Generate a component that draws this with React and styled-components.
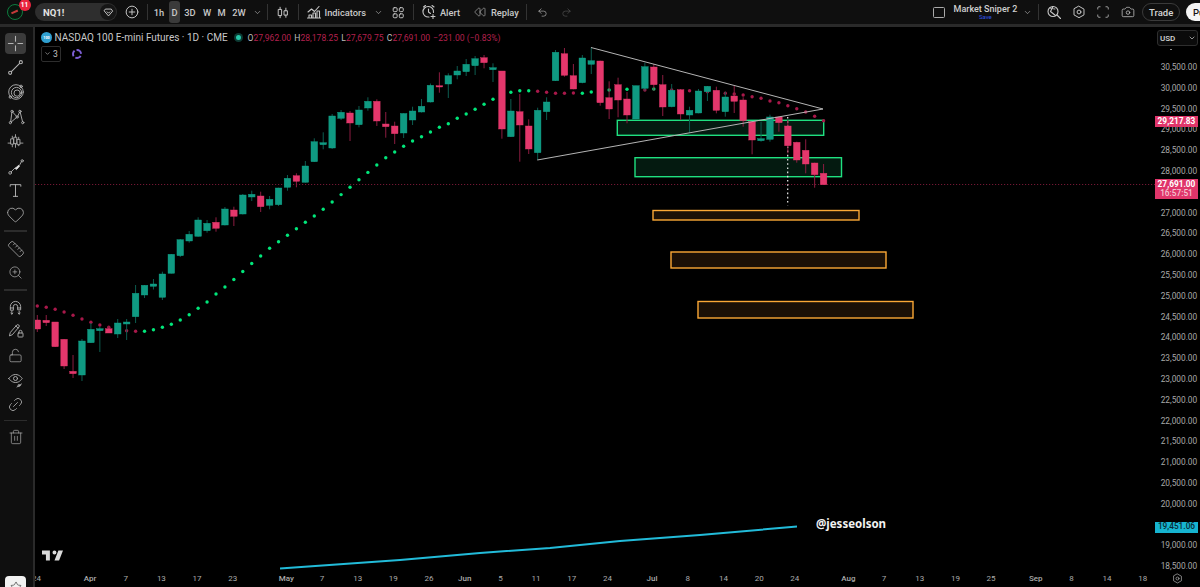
import React from "react";
import styled, { createGlobalStyle } from "styled-components";
import { Plus, ChevronDown, Undo2, Redo2, Camera, Heart, ZoomIn, LockOpen, Link2, Trash2, Ruler, Rewind, Star, Scan } from "lucide-react";

const Global = createGlobalStyle`
  html, body { margin: 0; padding: 0; background: #000; overflow: hidden; }
  #root { width: 1200px; height: 587px; }
  * { box-sizing: border-box; }
`;

const Page = styled.div`
  width: 1200px; height: 587px; display: flex; flex-direction: column; overflow: hidden;
  background: #000; font-family: Roboto, "Liberation Sans", sans-serif; color: #d1d4dc;
`;
const Header = styled.header`
  height: 27px; flex: none; display: flex; align-items: center; padding: 0 0 0 7px;
  background: #0f0f0f; border-bottom: 3px solid #2a2a2a;
`;
const Avatar = styled.div`
  position: relative; width: 16px; height: 16px; flex: none; border-radius: 50%;
  background: #07160d; border: 1.5px solid #0f7c3f;
`;
const AvatarMark = styled.span`
  position: absolute; left: 3px; top: 6px; width: 7px; height: 1.5px; background: #c23a3a; transform: rotate(-25deg);
`;
const Badge = styled.span`
  position: absolute; left: 10.5px; top: -5.8px; width: 12px; height: 12px; border-radius: 50%;
  background: #e8243f; color: #fff; font-size: 6.5px; font-weight: 700; display: flex; align-items: center; justify-content: center;
`;
const SymbolPill = styled.div`
  flex: none; width: 82px; height: 18px; margin-left: 12px; border-radius: 9px; background: #2e2e2e;
  display: flex; align-items: center; justify-content: space-between; padding: 0 1px 0 8px;
  font-size: 9.5px; font-weight: 700; color: #e4e4e4;
`;
const SymbolIcon = styled.span`
  width: 16px; height: 16px; border-radius: 50%; background: #161616; display: flex; align-items: center; justify-content: center;
`;
const Cell = styled.div`
  flex: none; width: ${p => p.$w}px; margin-left: ${p => p.$ml || 0}px; display: flex; align-items: center; justify-content: ${p => p.$left ? "flex-start" : "center"};
  white-space: nowrap; font-size: ${p => p.$fs || 9.3}px; font-weight: 500; color: ${p => p.$c || "#c8c8c8"};
  height: ${p => p.$active ? 22 : 16}px; border-radius: ${p => p.$active ? 3 : 0}px; background: ${p => p.$active ? "#3a3a3a" : "transparent"};
`;
const Sep = styled.span`
  flex: none; width: 1px; height: 16px; margin-left: ${p => p.$ml || 0}px; background: #333;
`;
const SaveBlock = styled.div`
  flex: none; width: 63px; margin-left: 9px; display: flex; flex-direction: column; align-items: center; line-height: 1;
`;
const LayoutName = styled.span`
  font-size: 9px; font-weight: 500; color: #cfcfcf; white-space: nowrap; line-height: 10px;
`;
const SaveLabel = styled.span`
  font-size: 6px; color: #2f55e8; line-height: 6px;
`;
const Square = styled.span`
  flex: none; width: 12.3px; height: 11px; margin-left: 359.7px; border: 1px solid #aaa; border-radius: 1.5px;
`;
const TradePill = styled.div`
  flex: none; width: 37.5px; height: 18px; margin-left: 7.5px; border: 1px solid #3a3a3a; border-radius: 9px;
  display: flex; align-items: center; justify-content: center; font-size: 9.5px; font-weight: 500; color: #d4d4d4;
`;
const PublishPill = styled.div`
  flex: none; width: 44px; height: 18px; margin-left: 6px; border-radius: 9px; background: #f4f4f4; color: #111;
  font-size: 9.5px; font-weight: 500; display: flex; align-items: center; padding-left: 7px;
`;
const Body = styled.div`
  flex: 1; min-height: 0; display: flex;
`;
const LeftBar = styled.aside`
  flex: none; width: 35px; position: relative; z-index: 2; background: #0f0f0f; border-right: 2.3px solid #2a2a2a;
  padding: 6px 0 0 5px; display: flex; flex-direction: column; color: #b4b4b4;
`;
const ToolButton = styled.div`
  flex: none; width: 21px; height: ${p => p.$h || 24.4}px; display: flex; align-items: center; justify-content: center;
  background: ${p => p.$active ? "#3b3b3b" : "transparent"}; border-radius: ${p => p.$active ? 4 : 0}px;
`;
const ToolSep = styled.span`
  flex: none; width: 23px; height: 1.5px; margin: ${p => p.$m}; background: #2c2c2c;
`;
const StarButton = styled.div`
  position: absolute; left: 5px; top: 549px; width: 21px; height: 21px; background: #f2f2f2; border-radius: 4px;
  display: flex; align-items: center; justify-content: center; color: #222;
`;
const ChartColumn = styled.div`
  flex: none; width: 1120px; display: flex; flex-direction: column;
`;
const Plot = styled.div`
  position: relative; width: 1120px; height: 543px; flex: none; overflow: hidden;
`;
const ChartSvg = styled.svg`
  display: block; width: 1120px; height: 543px;
`;
const Legend = styled.div`
  position: absolute; left: 6px; top: 5px; display: flex; flex-direction: column; gap: 2.5px;
`;
const LegendRow = styled.div`
  display: flex; align-items: center; white-space: nowrap;
`;
const IndexLogo = styled.span`
  width: 11px; height: 11px; border-radius: 50%; background: #2f9fd0; color: #fff; font-size: 3.8px; font-weight: 700;
  display: flex; align-items: center; justify-content: center;
`;
const LegendTitle = styled.span`
  font-size: 10px; color: #c9c9c9; margin-left: 2.5px; width: 174px;
`;
const StatusDot = styled.span`
  width: 9px; height: 9px; border-radius: 50%; background: #0c3a33; display: flex; align-items: center; justify-content: center; margin: 0 4.5px 0 5.5px;
  &::after { content: ""; width: 5px; height: 5px; border-radius: 50%; background: #26c6a8; }
`;
const Ohlc = styled.span`
  font-size: 8.6px; margin-right: 3.1px; color: #b3204e;
`;
const OhlcKey = styled.span`
  color: #bdbdbd;
`;
const CountBox = styled.span`
  width: 20px; height: 16px; border: 1px solid #2d2d2d; border-radius: 2px; font-size: 8.5px; color: #c4c4c4;
  display: flex; align-items: center; justify-content: center; gap: 2px;
`;
const Ring = styled.span`
  width: 10px; height: 10px; margin-left: 11px; border-radius: 50%; border: 2px dashed #7e5fd6;
`;
const Watermark = styled.div`
  position: absolute; left: 781px; top: 489px; font-family: "Noto Sans", sans-serif; font-size: 11.5px; font-weight: 700; color: #f2f2f2; line-height: 16px;
`;
const TvLogo = styled.svg`
  position: absolute; left: 6.5px; top: 522.5px; width: 21px; height: 11px; fill: #dadada;
`;
const TimeAxis = styled.div`
  height: 17px; flex: none; overflow: hidden;
`;
const TimeGrid = styled.div`
  display: grid; grid-template-columns: repeat(126, 8.935px); margin-left: -3px; height: 17px; align-items: center;
`;
const Tick = styled.span`
  grid-column: ${p => p.$i + 1}; grid-row: 1; justify-self: center; white-space: nowrap; font-size: 8px; color: #ababab;
  font-weight: ${p => p.$major ? 500 : 400};
`;
const PriceAxis = styled.aside`
  flex: none; width: 45px; position: relative; display: flex; flex-direction: column; background: #000;
`;
const CurrencySelect = styled.div`
  flex: none; width: 41px; height: 16px; margin: 3px 0 0 2px; border: 1px solid #2e2e2e; border-radius: 3px; background: #0b0b0b;
  display: flex; align-items: center; justify-content: space-between; padding: 0 1px 0 2px; font-size: 8px; font-weight: 500; color: #d8d8d8;
`;
const TopTick = styled.span`
  position: absolute; left: 15px; top: 22px; width: 2px; height: 1px; background: #888;
`;
const PriceList = styled.div`
  flex: none; height: 513.4px; margin-top: 10.6px;
`;
const PriceRow = styled.div`
  height: 20.8px; display: flex; align-items: center; padding-left: 5.7px; font-size: 8.3px; color: #a8a8a8; white-space: nowrap;
`;
const AxisCorner = styled.div`
  flex: none; height: 17px; padding-left: 17px; display: flex; align-items: center; color: #a8a8a8;
`;
const PriceTag = styled.div`
  position: absolute; left: 0; top: ${p => p.$top}px; width: 43px; height: ${p => p.$h}px; background: ${p => p.$bg};
  color: ${p => p.$c || "#fff"}; font-size: 8.3px; font-weight: ${p => p.$w || 700}; display: flex; flex-direction: column; align-items: center; justify-content: center; line-height: 9.5px;
`;
const TagSub = styled.span`
  font-weight: 500; color: #f4c6d3;
`;

const C = [
[315,320,329,332,"r"],[315,320.3,322.7,326,"r"],[322,322,346.7,347,"r"],[339,339.3,366,369,"r"],[355,371.3,373.7,378,"r"],
[339,341,375,381,"g"],[323,329.3,342.7,343,"g"],[327,328.7,330.7,352,"g"],[326,328.7,333,333,"r"],[319,323,334,338,"g"],
[319,322,324,340,"g"],[285,293.3,316.7,323,"g"],[285,285.3,295,298,"g"],[279,284,286.3,289.5,"g"],[271.7,274,297.3,300,"g"],
[254,254.3,273.3,273.5,"g"],[239,239.7,255.7,257,"g"],[231,234.3,241,242.7,"g"],[217.3,220,236.3,236.7,"g"],[220,223.3,230.7,232.7,"g"],
[217.3,222.3,228.3,231.7,"r"],[207,209,225,225.5,"g"],[206.7,210,216.3,226,"r"],[194,195,214,214.5,"g"],[190.7,194.3,197,201,"g"],
[191.7,196,206.7,212,"r"],[196,199.3,205.3,209.3,"g"],[187.7,188,204.7,206,"g"],[175,178.3,187.3,190.7,"g"],[173.3,175.7,181.3,187.3,"r"],
[161,166,182.3,182.5,"g"],[138.3,141.7,161.7,162,"g"],[132.3,142.7,144.7,149.3,"g"],[114,116,148,149,"g"],[110,112.3,118.3,120,"g"],
[111,113,123,141,"r"],[106,110,124.7,127.3,"g"],[97.3,101.3,108,110.7,"g"],[99.3,101.3,121,126,"r"],[112,124,126.7,137.7,"r"],
[121.7,126,133.7,144,"r"],[113.3,113.5,133,138,"g"],[106.7,111,120,125,"g"],[99,106.3,112,112.5,"g"],[83.5,85.3,102,102.5,"g"],
[72.3,85.7,87,92.7,"r"],[73.3,75.7,84,98,"g"],[66,71,75,79.3,"g"],[59,64.3,71.7,76,"g"],[56,58.7,65.7,75,"g"],
[55,57.7,62.7,68.3,"r"],[63.3,67.7,69.7,82,"g"],[71,71,129,138.7,"r"],[99,111,136.7,137,"g"],[94,111.7,125,161.7,"r"],
[119.3,126,149,154,"r"],[107.7,110.3,152.7,160,"g"],[97.3,102,111.7,120,"g"],[50,52.3,80.7,81,"g"],[48,53.7,75.3,76.7,"r"],
[64,75.7,89,89.3,"r"],[55,58,82.7,83.3,"g"],[47.3,60.7,64.3,74,"g"],[60.7,61,102.7,105.7,"r"],[81.3,97.7,109,119,"r"],
[77.7,84.7,100,117.3,"r"],[92,99,115,123.3,"r"],[85.7,85.7,119,119.5,"g"],[62.7,66.7,88.3,90.7,"g"],[64,67,84.7,90.7,"r"],
[75,84.7,107,116,"r"],[84,90.3,106.7,107.3,"g"],[89,89.7,114,120,"r"],[106.7,110.3,115,132.7,"g"],[89,91,113,113.3,"g"],
[86,86.3,91.7,101,"g"],[86.7,90.3,110.3,113.3,"r"],[91.7,97,111.7,116.7,"g"],[85.7,96,101.3,113,"r"],[97.3,100,120.7,126.7,"r"],
[121.7,121.7,140,154.3,"r"],[121.7,138.7,140.7,141.7,"g"],[114.7,117,139.3,141.7,"g"],[116.7,117,122.7,131.7,"r"],[120,126,145.7,153.3,"r"],
[141.7,142.3,160,162.7,"r"],[139.3,150.3,164,173.3,"r"],[162.7,163,174.7,187.7,"r"],[164,173.3,184.7,184.7,"r"],
];
const barX = i => 37.3 + 8.935 * i;

const D = [
[0,306,"r"],[1,307.3,"r"],[2,309.3,"r"],[3,312,"r"],[4,315.3,"r"],[5,319,"r"],[6,322.3,"r"],[7,325,"r"],[8,327.3,"r"],[9,329,"r"],[10,330.7,"r"],[11,331.3,"r"],
[12,331.3,"g"],[13,329.7,"g"],[14,327.3,"g"],[15,324.3,"g"],[16,320,"g"],[17,314.7,"g"],[18,308.3,"g"],[19,302,"g"],[20,294,"g"],[21,287,"g"],
[22,279.5,"g"],[23,271.5,"g"],[24,263.5,"g"],[25,256,"g"],[26,248.3,"g"],[27,241.7,"g"],[28,235.3,"g"],[29,228.7,"g"],[30,222.3,"g"],[31,216,"g"],[32,209.3,"g"],
[33,202,"g"],[34,194.6,"g"],[35,187.2,"g"],[36,179.8,"g"],[37,172.4,"g"],[38,165,"g"],[39,157.7,"g"],[40,152,"g"],[41,146.3,"g"],[42,141,"g"],[43,136.7,"g"],[44,132,"g"],[45,127.3,"g"],[46,123.7,"g"],[47,118.3,"g"],[48,114,"g"],[49,109.3,"g"],[50,104.3,"g"],[51,99.3,"g"],
[53,92.3,"g"],[54,90.7,"g"],[55,90.7,"g"],[56,91.3,"r"],[57,92.3,"r"],[58,93.3,"r"],[59,93.3,"r"],[60,93,"r"],[61,93.3,"g"],[62,92,"g"],[64,90,"g"],[66,89.3,"g"],[68,90,"r"],[69,89,"g"],[71,90,"r"],[73,90.7,"r"],[75,91.7,"r"],[77,93.3,"r"],[78,94,"r"],[79,95,"r"],[80,96.7,"r"],[81,98.3,"r"],[82,101,"r"],[83,102.7,"r"],[84,105.7,"r"],[85,108.7,"r"],[86,112,"r"],[87,116.3,"r"],[88,120.7,"r"],
];

const ZONES = [
  [617.3,120.3,206.4,15,"g"],[635,157.7,206.5,19,"g"],
  [653,210.5,206,9.5,"o"],[671,252,215,16,"o"],[698,301.5,215,16.5,"o"],
];
const TICKS = [[0,"24"],[6,"Apr",1],[10,"7"],[14,"13"],[18,"17"],[22,"23"],[28,"May",1],[32,"7"],[36,"13"],[40,"19"],[44,"26"],[48,"Jun",1],[52,"5"],[56,"11"],[60,"17"],[64,"24"],[69,"Jul",1],[73,"8"],[77,"14"],[81,"20"],[85,"24"],[91,"Aug",1],[95,"7"],[99,"13"],[103,"19"],[107,"25"],[112,"Sep",1],[116,"8"],[120,"14"],[124,"18"]];
const PRICES = ["30,500.00","30,000.00","29,500.00","29,000.00","28,500.00","28,000.00","","27,000.00","26,500.00","26,000.00","25,500.00","25,000.00","24,500.00","24,000.00","23,500.00","23,000.00","22,500.00","22,000.00","21,500.00","21,000.00","20,500.00","20,000.00","","19,000.00","18,500.00"];

const I = ({ children, s = 16, w = 1.1 }) => (
  <svg width={s} height={s} viewBox="0 0 16 16" fill="none" stroke="currentColor" strokeWidth={w} strokeLinecap="round" strokeLinejoin="round">{children}</svg>
);
const ic = { size: 14, strokeWidth: 1.3 };

const Chart = () => (
  <ChartSvg viewBox="35 27 1120 543">
    {ZONES.map(([x,y,w,h,k],i) => (
      <rect key={i} x={x} y={y} width={w} height={h} fill={k === "g" ? "#041a10" : "#1b1006"} stroke={k === "g" ? "#1fe080" : "#fba836"} strokeWidth="1.4" />
    ))}
    <line x1="35" y1="184.5" x2="1155" y2="184.5" stroke="#8f1d40" strokeWidth="0.8" strokeDasharray="1.2 1.8" />
    <line x1="787.7" y1="117" x2="787.7" y2="205.5" stroke="#f0f0f0" strokeWidth="1.2" strokeDasharray="1.6 2.6" />
    {D.map(([i,y,k]) => (
      <circle key={i} cx={barX(i)} cy={y} r="1.7" fill={k === "g" ? "#00e67a" : "#a8184a"} />
    ))}
    {C.map(([wt,bt,bb,wb,k],i) => {
      const x = barX(i);
      return (
        <g key={i}>
          <line x1={x} x2={x} y1={wt} y2={wb} stroke={k === "g" ? "#0c5d50" : "#8c1c40"} strokeWidth="1" />
          <rect x={x - 3.3} y={bt} width="6.6" height={bb - bt} fill={k === "g" ? "#0f9a82" : "#e4376c"} stroke={k === "g" ? "#12a58b" : "#e4376c"} strokeWidth="0.4" />
        </g>
      );
    })}
    <polyline points="591,47.5 823,109 537.3,160" fill="none" stroke="#b4b4b4" strokeWidth="1" />
    <polyline points="280,568.5 400,560 480,553 550,548 620,541 700,535 797,526.5" fill="none" stroke="#22bbd9" strokeWidth="2" />
  </ChartSvg>
);

const Tools = () => (
  <LeftBar>
    <ToolButton $active $h={21}>
      <I s={19} w={0.9}><path d="M8 2v4M8 10v4M2 8h4M10 8h4" /></I>
    </ToolButton>
    <ToolButton $h={26}><I s={19} w={0.9}><circle cx="3.5" cy="12.5" r="1.3" /><circle cx="12.5" cy="3.5" r="1.3" /><path d="M4.5 11.5l7-7" /></I></ToolButton>
    <ToolButton><I s={18} w={0.8}><circle cx="8" cy="8" r="6.5" /><circle cx="8.5" cy="8.5" r="4.6" /><circle cx="9" cy="9" r="2.8" /><circle cx="3" cy="12.5" r="1.1" /><circle cx="12.5" cy="3" r="1.1" /></I></ToolButton>
    <ToolButton><I s={18} w={0.8}><circle cx="3" cy="13" r="1" /><circle cx="4.5" cy="3" r="1" /><circle cx="9" cy="8" r="1" /><circle cx="11.5" cy="3" r="1" /><circle cx="14" cy="13" r="1" /><path d="M3.3 12l1-8M5.2 3.8l3.2 3.5M9.6 7.2l1.5-3.3M11.8 4l2 8M3.8 12.4l4.5-3.8" /></I></ToolButton>
    <ToolButton $h={26}><I s={17} w={0.8}><path d="M1 9.5h14M5 3v10M8 1.5v12M11 4v8" /><rect x="3.8" y="5.5" width="2.4" height="5" fill="#0f0f0f" /><rect x="6.8" y="4" width="2.4" height="6" fill="#0f0f0f" /><rect x="9.8" y="6" width="2.4" height="5" fill="#0f0f0f" /></I></ToolButton>
    <ToolButton><I s={18} w={0.8}><circle cx="2.8" cy="13.2" r="1.2" /><circle cx="13.5" cy="2.5" r="1" /><path d="M3.8 12.2l3.5-3.5" /><path d="M7.5 9l3-2.6.7.7L8.6 10z" fill="#e8e8e8" stroke="#e8e8e8" /><path d="M11.5 5.8l1.3-2.5" /></I></ToolButton>
    <ToolButton $h={23}><I s={17} w={0.9}><path d="M3 4V2.5h10V4M8 2.5v11M6 13.5h4" /></I></ToolButton>
    <ToolButton><Heart size={19} strokeWidth={1} /></ToolButton>
    <ToolSep $m="3.5px 0 3px -1px" />
    <ToolButton $h={29}><Ruler size={18} strokeWidth={1} /></ToolButton>
    <ToolButton $h={18}><ZoomIn size={15} strokeWidth={1.1} /></ToolButton>
    <ToolSep $m="7.7px 0 7.5px -1px" />
    <ToolButton $h={19}><I s={15} w={0.95}><path d="M2.5 10.5V7a5.5 5.5 0 0 1 11 0v3.5h-3.2V7a2.3 2.3 0 0 0-4.6 0v3.5z" /><path d="M2.5 8.5h3.2M10.3 8.5h3.2M4.1 12v3M3 14l1.1 1 1.1-1M11.9 12v3M10.8 14l1.1 1 1.1-1" /></I></ToolButton>
    <ToolButton $h={26}><I s={16} w={0.9}><path d="M1.5 13.5l.8-3 6.5-7.5a1.5 1.5 0 0 1 2.2 2L4.5 12.5z" /><path d="M7.8 4l2.3 2" /><rect x="10" y="11" width="5" height="4" rx=".6" /><path d="M11 11V9.8a1.5 1.5 0 0 1 3 0V11" /></I></ToolButton>
    <ToolButton $h={24.5}><LockOpen size={15} strokeWidth={1.1} /></ToolButton>
    <ToolButton $h={25}><I s={16} w={0.9}><path d="M.8 6.5S3.2 2.5 7.5 2.5s6.7 4 6.7 4-2.4 4-6.7 4S.8 6.5.8 6.5z" /><circle cx="7.5" cy="6.5" r="2" /><path d="M9 15l4.5-3" /><circle cx="11" cy="13.5" r="1" /></I></ToolButton>
    <ToolButton $h={22.5}><Link2 size={17} strokeWidth={1.1} style={{ transform: "rotate(-45deg)" }} /></ToolButton>
    <ToolSep $m="4.5px 0 5px -1px" />
    <ToolButton $h={22}><Trash2 size={16} strokeWidth={1} /></ToolButton>
    <StarButton><Star size={12} strokeWidth={1.2} /></StarButton>
  </LeftBar>
);

export default function App() {
  return (
    <Page>
      <Global />
      <Header>
        <Avatar><AvatarMark /><Badge>11</Badge></Avatar>
        <SymbolPill>
          NQ1!
          <SymbolIcon><I s={11} w={1.2}><path d="M4 3h8l2 3-6 7-6-7z" /><path d="M6 7l2 2 2-2" /></I></SymbolIcon>
        </SymbolPill>
        <Cell $w={16} $ml={7}><I s={14}><circle cx="8" cy="8" r="6.7" /><path d="M8 4.8v6.4M4.8 8h6.4" /></I></Cell>
        <Sep $ml={6.5} />
        <Cell $w={10} $ml={6.5}>1h</Cell>
        <Cell $w={11} $ml={5} $active>D</Cell>
        <Cell $w={14} $ml={3}>3D</Cell>
        <Cell $w={12} $ml={4}>W</Cell>
        <Cell $w={11} $ml={3}>M</Cell>
        <Cell $w={14} $ml={5}>2W</Cell>
        <Cell $w={10} $ml={6}><ChevronDown size={9} strokeWidth={1.5} /></Cell>
        <Sep $ml={5} />
        <Cell $w={14} $ml={8}><I s={15}><rect x="3" y="4.5" width="3.4" height="7" /><rect x="9.6" y="6" width="3.4" height="5" /><path d="M4.7 2v2.5M4.7 11.5V14M11.3 3v3M11.3 11v2.5" /></I></Cell>
        <Sep $ml={7.5} />
        <Cell $w={16} $ml={7.5}><I s={16}><path d="M2 8l3.5-3 3 2.5L13 2.5" /><path d="M3 14V11h2.5v3M7 14V9h2.5v5M11 14V7h2.5v7M1.5 14h13" /></I></Cell>
        <Cell $w={40} $ml={2.5} $left>Indicators</Cell>
        <Cell $w={10} $ml={8.5}><ChevronDown size={9} strokeWidth={1.5} /></Cell>
        <Cell $w={14} $ml={8}><I s={15}><rect x="2.5" y="2.5" width="4.5" height="4.5" rx="1.2" /><rect x="9.5" y="2.5" width="4.5" height="4.5" rx="1.2" /><rect x="2.5" y="9.5" width="4.5" height="4.5" rx="1.2" /><rect x="9.5" y="9.5" width="4.5" height="4.5" rx="1.2" /></I></Cell>
        <Sep $ml={7.5} />
        <Cell $w={16} $ml={7}><I s={16}><path d="M12.5 8.5A5.3 5.3 0 1 0 8 13" /><path d="M7.5 5v3l2 1.5M2.5 3L4.5 1.5M13 3l-2-1.5M12 10.5v4M10 12.5h4" /></I></Cell>
        <Cell $w={20} $ml={3.4} $left>Alert</Cell>
        <Cell $w={13} $ml={13.5}><Rewind size={12} strokeWidth={1.2} /></Cell>
        <Cell $w={27} $ml={4.5} $left>Replay</Cell>
        <Sep $ml={8.5} />
        <Cell $w={12} $ml={9.5}><Undo2 size={11} strokeWidth={1.3} /></Cell>
        <Cell $w={12} $ml={12} $c="#5c5c5c"><Redo2 size={11} strokeWidth={1.3} /></Cell>
        <Square />
        <SaveBlock>
          <LayoutName>Market Sniper 2</LayoutName>
          <SaveLabel>Save</SaveLabel>
        </SaveBlock>
        <Cell $w={10} $ml={6}><ChevronDown size={9} strokeWidth={1.5} /></Cell>
        <Sep $ml={5.5} />
        <Cell $w={16} $ml={6.5}><I s={16}><circle cx="7" cy="7.5" r="5" /><path d="M7 2.5l-2.5 5 5 4M4 4l5 1M11 11l3.5 3.5" /></I></Cell>
        <Cell $w={14} $ml={10}><I s={16}><path d="M8 1.5l5.7 3.2v6.6L8 14.5l-5.7-3.2V4.7z" /><circle cx="8" cy="8" r="2.2" /></I></Cell>
        <Cell $w={14} $ml={10}><Scan {...ic} /></Cell>
        <Cell $w={14} $ml={11}><Camera {...ic} /></Cell>
        <TradePill>Trade</TradePill>
        <PublishPill>Publish</PublishPill>
      </Header>
      <Body>
        <Tools />
        <ChartColumn>
          <Plot>
            <Chart />
            <Legend>
              <LegendRow>
                <IndexLogo>100</IndexLogo>
                <LegendTitle>NASDAQ 100 E-mini Futures · 1D · CME</LegendTitle>
                <StatusDot />
                <Ohlc><OhlcKey>O</OhlcKey>27,962.00</Ohlc>
                <Ohlc><OhlcKey>H</OhlcKey>28,178.25</Ohlc>
                <Ohlc><OhlcKey>L</OhlcKey>27,679.75</Ohlc>
                <Ohlc><OhlcKey>C</OhlcKey>27,691.00</Ohlc>
                <Ohlc>−231.00 (−0.83%)</Ohlc>
              </LegendRow>
              <LegendRow>
                <CountBox><ChevronDown size={7} strokeWidth={2} />3</CountBox>
                <Ring />
              </LegendRow>
            </Legend>
            <TvLogo viewBox="2 6 32 15"><path d="M14 6H2v6h6v9h6V6zm14 15h-7l6-15h7l-6 15zm-7-9a3 3 0 1 0 0-6 3 3 0 0 0 0 6z" /></TvLogo>
            <Watermark>@jesseolson</Watermark>
          </Plot>
          <TimeAxis>
            <TimeGrid>
              {TICKS.map(([i, t, m]) => <Tick key={i} $i={i} $major={m}>{t}</Tick>)}
            </TimeGrid>
          </TimeAxis>
        </ChartColumn>
        <PriceAxis>
          <CurrencySelect>USD<ChevronDown size={8} strokeWidth={2} /></CurrencySelect>
          <TopTick />
          <PriceList>
            {PRICES.map((p, i) => <PriceRow key={i}>{p}</PriceRow>)}
          </PriceList>
          <AxisCorner><I s={11}><path d="M8 1.5l5.7 3.2v6.6L8 14.5l-5.7-3.2V4.7z" /><circle cx="8" cy="8" r="2.2" /></I></AxisCorner>
          <PriceTag $top={89} $h={10.7} $bg="#e0356a">29,217.83</PriceTag>
          <PriceTag $top={152} $h={20} $bg="#e0356a">27,691.00<TagSub>16:57:51</TagSub></PriceTag>
          <PriceTag $top={494.7} $h={11} $bg="#16b4d0" $c="#0a2a33" $w={500}>19,451.06</PriceTag>
        </PriceAxis>
      </Body>
    </Page>
  );
}
